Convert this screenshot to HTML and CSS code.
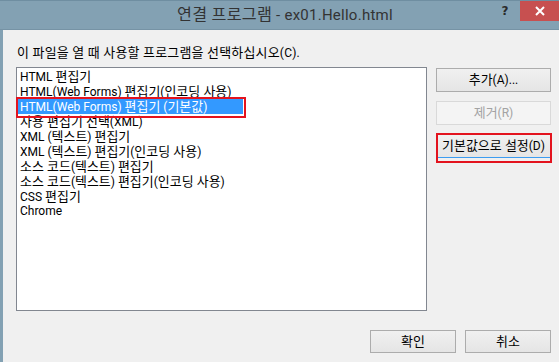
FILE: index.html
```html
<!DOCTYPE html>
<html lang="ko">
<head>
<meta charset="utf-8">
<title>연결 프로그램</title>
<link rel="stylesheet" href="styles.css">
</head>
<body>
<div class="window">
  <div class="titlebar">
    <span class="title"><span class="ko">연결 프로그램</span> - ex01.Hello.html</span>
    <span class="help">?</span>
    <span class="close"><svg width="10" height="10" viewBox="0 0 10 10"><path d="M1 1L9 9M9 1L1 9" stroke="#fff" stroke-width="2"/></svg></span>
  </div>
  <div class="client">
    <div class="prompt"><span class="ko">이 파일을 열 때 사용할 프로그램을 선택하십시오</span>(C).</div>
    <div class="main">
      <div class="list">
        <div class="item">HTML <span class="ko">편집기</span></div>
        <div class="item">HTML(Web Forms) <span class="ko">편집기</span>(<span class="ko">인코딩 사용</span>)</div>
        <div class="item selected">HTML(Web Forms) <span class="ko">편집기</span> (<span class="ko">기본값</span>)<span class="mark mark-item"></span></div>
        <div class="item"><span class="ko">사용 편집기 선택</span>(XML)</div>
        <div class="item">XML (<span class="ko">텍스트</span>) <span class="ko">편집기</span></div>
        <div class="item">XML (<span class="ko">텍스트</span>) <span class="ko">편집기</span>(<span class="ko">인코딩 사용</span>)</div>
        <div class="item"><span class="ko">소스 코드</span>(<span class="ko">텍스트</span>) <span class="ko">편집기</span></div>
        <div class="item"><span class="ko">소스 코드</span>(<span class="ko">텍스트</span>) <span class="ko">편집기</span>(<span class="ko">인코딩 사용</span>)</div>
        <div class="item">CSS <span class="ko">편집기</span></div>
        <div class="item">Chrome</div>
      </div>
      <div class="side">
        <button class="btn"><span class="ko">추가</span>(A)...</button>
        <button class="btn disabled"><span class="ko">제거</span>(R)</button>
        <div class="btn-wrap">
          <button class="btn focused"><span class="ko">기본값으로 설정</span>(D)</button>
          <span class="mark mark-btn"></span>
        </div>
      </div>
    </div>
    <div class="footer">
      <button class="btn foot"><span class="ko">확인</span></button>
      <button class="btn foot"><span class="ko">취소</span></button>
    </div>
  </div>
</div>
</body>
</html>
```
FILE: styles.css
```css
* { box-sizing: border-box; }
html, body { margin: 0; padding: 0; }
body {
  font-family: Roboto, "Noto Sans CJK KR", sans-serif;
  background: #f0f0f0;
}
.ko {
  font-size: 1.08em;
}
.window {
  width: 559px;
  height: 362px;
  overflow: hidden;
  background: #f0f0f0;
  display: flex;
  flex-direction: column;
}
.titlebar {
  height: 30px;
  flex: none;
  background: #83a1b3;
  border-top: 1px solid #6f8ea1;
  border-bottom: 1px solid #7693a5;
  display: flex;
  align-items: flex-start;
}
.title {
  margin-left: 177px;
  margin-top: 4px;
  font-size: 15px;
  line-height: 20px;
  letter-spacing: 0.25px;
  color: #333;
  flex: 1;
  white-space: nowrap;
}
.help {
  width: 20px;
  margin-top: 3px;
  font-family: "DejaVu Sans", sans-serif;
  font-weight: bold;
  font-size: 12px;
  line-height: 14px;
  color: #2a2a2a;
  text-align: center;
  margin-right: 5px;
}
.close {
  width: 45px;
  height: 20px;
  margin-right: -6px;
  background: #c75050;
  display: flex;
  align-items: center;
  justify-content: center;
  padding-right: 6px;
}
.close svg { display: block; }
.client {
  flex: 1;
  border-left: 3px solid #83a1b3;
  padding-left: 13px;
  padding-right: 8px;
  display: flex;
  flex-direction: column;
}
.prompt {
  margin-top: 15px;
  margin-left: 1px;
  height: 15px;
  font-size: 12px;
  line-height: 15px;
  letter-spacing: 0.2px;
  color: #000;
  white-space: nowrap;
}
.main {
  margin-top: 7px;
  display: flex;
  align-items: flex-start;
}
.list {
  width: 411px;
  height: 244px;
  padding-top: 1px;
  border: 1px solid #828790;
  background: #fff;
  flex: none;
}
.item {
  position: relative;
  width: 226px;
  height: 15px;
  padding-left: 3px;
  font-size: 12px;
  line-height: 15px;
  color: #000;
  white-space: nowrap;
}
.item.selected {
  background: #3399ff;
  color: #fff;
}
.mark {
  position: absolute;
  border: 2px solid #e3131e;
  pointer-events: none;
}
.mark-item {
  left: -1px;
  top: -2px;
  width: 230px;
  height: 21px;
  z-index: 2;
}
.side {
  margin-left: 9px;
  margin-top: 1px;
  width: 115px;
  display: flex;
  flex-direction: column;
  gap: 9px;
}
.btn {
  font-family: Roboto, "Noto Sans CJK KR", sans-serif;
  font-size: 12px;
  line-height: 15px;
  color: #000;
  height: 24px;
  width: 100%;
  padding: 0;
  margin: 0;
  border: 1px solid #acacac;
  background: linear-gradient(#f0f0f0, #e5e5e5);
  border-radius: 0;
}
.btn.disabled {
  border-color: #d9d9d9;
  background: #f4f4f4;
  color: #a3a3a3;
}
.btn.focused {
  border-color: #3c9cf0;
  background: linear-gradient(#f0f0f0, #e5e5e5);
}
.btn-wrap {
  position: relative;
}
.mark-btn {
  left: 0;
  top: -1px;
  width: 116px;
  height: 30px;
}
.footer {
  margin-top: 19px;
  display: flex;
  justify-content: flex-end;
  gap: 9px;
}
.btn.foot {
  width: 86px;
  height: 23px;
}
```
